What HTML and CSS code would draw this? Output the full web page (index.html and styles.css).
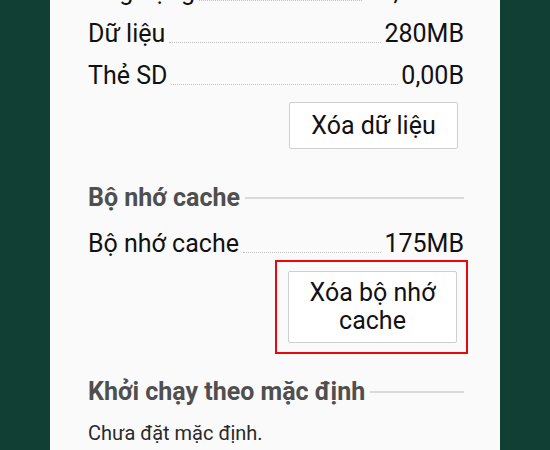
FILE: index.html
```html
<!DOCTYPE html>
<html lang="vi">
<head>
    <meta charset="UTF-8">
    <meta name="viewport" content="width=device-width, initial-scale=1.0">
    <title>Thông tin ứng dụng</title>
    <link rel="stylesheet" href="styles.css">
</head>
<body>
    <main class="panel">
        <!-- Bộ nhớ -->
        <div class="info-row">
            <span class="info-label">Ứng dụng</span>
            <span class="leader"></span>
            <span class="info-value">17,64MB</span>
        </div>
        <div class="info-row">
            <span class="info-label">Dữ liệu</span>
            <span class="leader"></span>
            <span class="info-value">280MB</span>
        </div>
        <div class="info-row">
            <span class="info-label">Thẻ SD</span>
            <span class="leader"></span>
            <span class="info-value">0,00B</span>
        </div>
        <div class="button-row button-row-data">
            <button class="action-button">Xóa dữ liệu</button>
        </div>

        <!-- Bộ nhớ cache -->
        <h2 class="section-title">Bộ nhớ cache</h2>
        <div class="info-row">
            <span class="info-label">Bộ nhớ cache</span>
            <span class="leader"></span>
            <span class="info-value">175MB</span>
        </div>
        <div class="button-row">
            <div class="highlight">
                <button class="action-button">Xóa bộ nhớ cache</button>
            </div>
        </div>

        <!-- Khởi chạy theo mặc định -->
        <h2 class="section-title section-title-last">Khởi chạy theo mặc định</h2>
        <p class="note">Chưa đặt mặc định.</p>
    </main>
</body>
</html>
```

FILE: styles.css
```css
:root {
    --bg-color: #113f34;
    --panel-color: #fafafa;
    --text-color: #111;
    --title-color: #4f4f4f;
    --line-color: #dadada;
    --border-color: #cfcfcf;
}

* {
    margin: 0;
    padding: 0;
    box-sizing: border-box;
}

html, body {
    height: 100%;
}

body {
    font-family: Roboto, "Noto Sans", "Liberation Sans", sans-serif;
    background-color: var(--bg-color);
    color: var(--text-color);
    overflow: hidden;
}

.panel {
    width: 450px;
    min-height: 500px;
    margin: -29px 0 0 50px;
    padding: 0 36px 0 38px;
    background-color: var(--panel-color);
}

.info-row {
    display: flex;
    height: 42px;
    font-size: 25px;
    line-height: 42px;
}

.leader {
    flex: 1;
    align-self: flex-end;
    height: 1px;
    margin: 0 3px 12px 4px;
    border-bottom: 1px dotted #c2c2c2;
}

.button-row {
    display: flex;
    justify-content: flex-end;
    padding-right: 6px;
}

.button-row-data {
    margin-top: 5px;
}

.action-button {
    width: 169px;
    padding: 8px 4px;
    border: 1px solid var(--border-color);
    border-radius: 2px;
    background-color: #fff;
    font-family: inherit;
    font-size: 25px;
    line-height: 29px;
    color: var(--text-color);
}

.highlight {
    margin: -5px -10px 0 0;
    padding: 9px 9px 9px 11px;
    border: 2px solid #e8080c;
}

.highlight .action-button {
    padding: 7px 4px;
    line-height: 28px;
}

.section-title {
    display: flex;
    align-items: center;
    gap: 5px;
    margin-top: 28px;
    font-size: 25px;
    font-weight: bold;
    line-height: 42px;
    color: var(--title-color);
}

.section-title::after {
    content: "";
    flex: 1;
    height: 2px;
    background-color: var(--line-color);
}

.section-title + .info-row {
    margin-top: 4px;
}

.section-title-last {
    margin-top: 17px;
}

.note {
    margin-top: 7px;
    font-size: 20px;
    line-height: 26px;
    color: #2a2a2a;
}
```
